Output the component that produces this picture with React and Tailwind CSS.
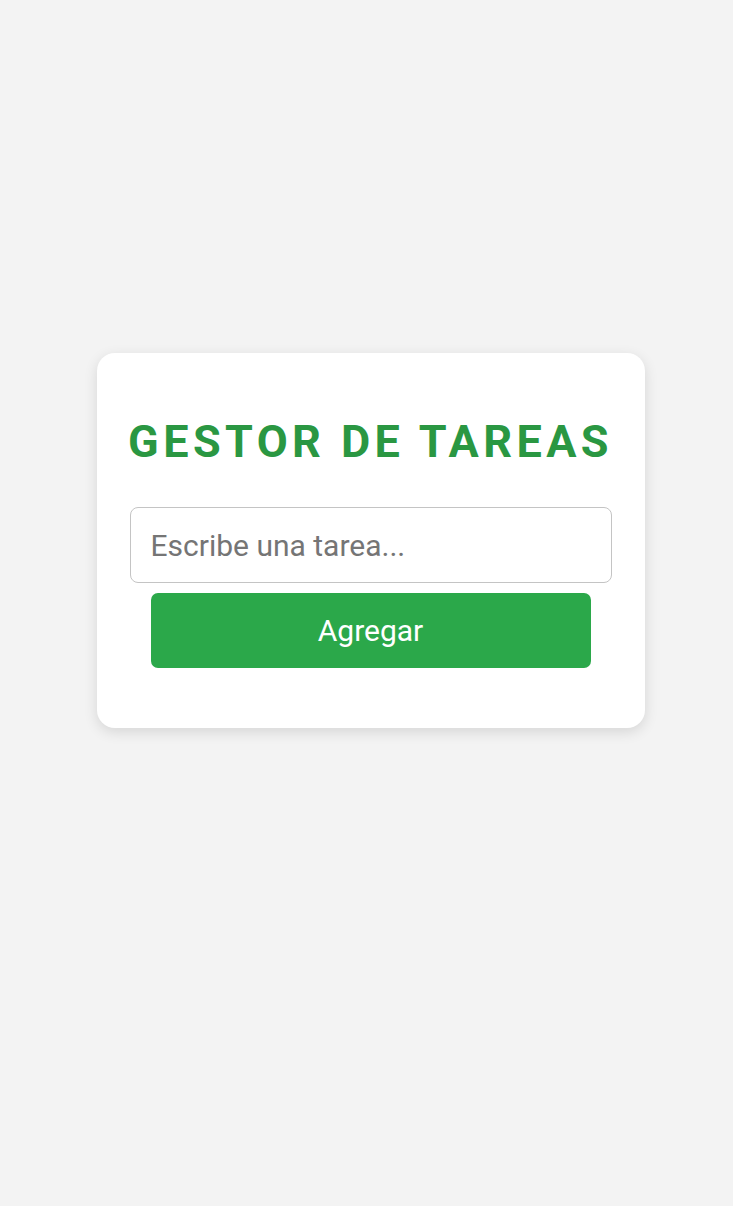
import { useState } from "react";

export default function App() {
  const [task, setTask] = useState("");

  return (
    <div className="min-h-[1206px] w-full bg-[#f3f3f3] flex items-start justify-center pl-[8px] pt-[353px] font-['Roboto',_'Liberation_Sans',_sans-serif]">
      {/* Card */}
      <div className="w-[548px] bg-white rounded-[18px] shadow-[0_4px_14px_rgba(0,0,0,0.12)] px-[33px] pt-[66px] pb-[60px] flex flex-col items-center">
        <h1 className="text-[45px] leading-[45px] font-bold tracking-[4.4px] text-[#2a9742] text-center whitespace-nowrap">
          GESTOR DE TAREAS
        </h1>

        <input
          type="text"
          value={task}
          onChange={(e) => setTask(e.target.value)}
          placeholder="Escribe una tarea..."
          className="mt-[43px] w-full h-[76px] px-[20px] text-[30px] text-[#333] placeholder-[#757575] border border-[#c4c4c4] rounded-[8px] outline-none"
        />

        <button className="mt-[10px] w-[440px] h-[75px] bg-[#2ba84a] text-white text-[30px] rounded-[7px]">
          Agregar
        </button>
      </div>
    </div>
  );
}
